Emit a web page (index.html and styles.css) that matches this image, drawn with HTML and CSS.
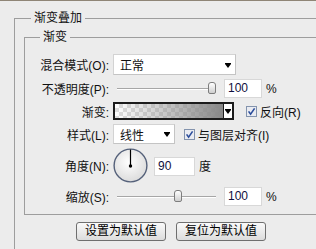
FILE: index.html
```html
<!DOCTYPE html>
<html lang="zh-CN">
<head>
    <meta charset="UTF-8">
    <title>渐变叠加</title>
    <link rel="stylesheet" href="styles.css">
</head>
<body>
    <!-- Outer group: 渐变叠加 -->
    <div class="group outer">
        <div class="group-title">渐变叠加</div>

        <!-- Inner group: 渐变 -->
        <div class="group inner">
            <div class="group-title">渐变</div>
            <div class="rows">
                <div class="row h21">
                    <span class="lbl">混合模式(O):</span>
                    <div class="select blend"><span>正常</span><i class="arrow"></i></div>
                </div>

                <div class="row h19">
                    <span class="lbl">不透明度(P):</span>
                    <div class="slider">
                        <div class="track" style="width: 95px"></div>
                        <div class="thumb"></div>
                        <div class="track rest"></div>
                    </div>
                    <div class="field">100</div>
                    <span class="unit">%</span>
                </div>

                <div class="row h18">
                    <span class="lbl">渐变:</span>
                    <div class="gradient">
                        <div class="gradient-fill"></div>
                        <div class="gradient-arrow"><i class="arrow"></i></div>
                    </div>
                    <label class="check reverse">
                        <svg width="11" height="11" viewBox="0 0 11 11"><rect x="0.5" y="0.5" width="10" height="10" fill="#e9ebf1" stroke="#8393ad"/><path d="M2.6 5.4 L4.6 8.2 L8.6 2.4" stroke="#2b4d9b" stroke-width="1.6" fill="none"/></svg>
                        反向(R)
                    </label>
                </div>

                <div class="row h20">
                    <span class="lbl">样式(L):</span>
                    <div class="select style"><span>线性</span><i class="arrow"></i></div>
                    <label class="check align">
                        <svg width="11" height="11" viewBox="0 0 11 11"><rect x="0.5" y="0.5" width="10" height="10" fill="#e9ebf1" stroke="#8393ad"/><path d="M2.6 5.4 L4.6 8.2 L8.6 2.4" stroke="#2b4d9b" stroke-width="1.6" fill="none"/></svg>
                        与图层对齐(I)
                    </label>
                </div>

                <div class="row h35">
                    <span class="lbl">角度(N):</span>
                    <svg class="dial" width="35" height="35" viewBox="0 0 35 35">
                        <defs>
                            <radialGradient id="dialFill" cx="45%" cy="40%" r="65%">
                                <stop offset="0" stop-color="#ffffff"/>
                                <stop offset="1" stop-color="#d9d9d9"/>
                            </radialGradient>
                        </defs>
                        <circle cx="17.5" cy="17.5" r="16.4" fill="url(#dialFill)" stroke="#55617a" stroke-width="1.4"/>
                        <line x1="17.5" y1="18" x2="17.5" y2="1.5" stroke="#000" stroke-width="1.2"/>
                        <circle cx="17.5" cy="18" r="1.7" fill="#000"/>
                    </svg>
                    <div class="field angle">90</div>
                    <span class="unit">度</span>
                </div>

                <div class="row h19">
                    <span class="lbl">缩放(S):</span>
                    <div class="slider">
                        <div class="track" style="width: 57px"></div>
                        <div class="thumb"></div>
                        <div class="track rest"></div>
                    </div>
                    <div class="field">100</div>
                    <span class="unit">%</span>
                </div>
            </div>
        </div>

        <div class="buttons">
            <button type="button" class="btn">设置为默认值</button>
            <button type="button" class="btn">复位为默认值</button>
        </div>
    </div>
</body>
</html>
```

FILE: styles.css
```css
* {
    box-sizing: border-box;
}

body {
    margin: 0;
    width: 316px;
    height: 249px;
    overflow: hidden;
    background: #ececec;
    border-top: 1px solid #8f8576;
    font: 12px "Liberation Sans", "Noto Sans CJK SC", sans-serif;
    color: #111;
}

/* group boxes */
.group {
    border-top: 1px solid #9d9d9d;
    border-left: 1px solid #9d9d9d;
}

.group-title {
    width: fit-content;
    height: 16px;
    line-height: 16px;
    padding: 0 3px;
    background: #ececec;
    margin: -9px 0 0 16px;
}

.outer {
    height: 231px;
    margin: 17px 0 0 14px;
}

.inner {
    margin: 11px 0 0 9px;
    padding-bottom: 8px;
    border-bottom: 1px solid #9d9d9d;
}

.inner > .group-title {
    margin-left: 15px;
}

.rows {
    margin-top: 9px;
    display: flex;
    flex-direction: column;
    gap: 4px;
}

.row {
    display: flex;
    align-items: center;
}

.h18 { height: 18px; }
.h19 { height: 19px; }
.h20 { height: 20px; }
.h21 { height: 21px; }
.h35 { height: 35px; }

.lbl {
    width: 84px;
    margin-right: 4px;
    text-align: right;
    white-space: nowrap;
}

/* dropdowns */
.select {
    height: 100%;
    display: flex;
    align-items: center;
    justify-content: space-between;
    background: #fff;
    border: 1px solid #d3d3d3;
    border-right-color: #c4c4c4;
    border-bottom-color: #c4c4c4;
    padding: 0 4px 0 6px;
}

.blend {
    width: 123px;
}

.style {
    width: 62px;
}

.arrow {
    display: block;
    width: 0;
    height: 0;
    border-left: 3.5px solid transparent;
    border-right: 3.5px solid transparent;
    border-top: 4px solid #000;
    box-shadow: 0 -1px 0 #000;
    margin-top: 2px;
}

/* sliders */
.slider {
    width: 103px;
    height: 100%;
    padding-left: 4px;
    display: flex;
    align-items: center;
}

.track {
    height: 2px;
    border-top: 1px solid #a6a6a6;
    background: #fff;
    margin-top: 1px;
}

.track.rest {
    flex: 1;
}

.thumb {
    width: 8px;
    height: 12px;
    border: 1px solid #7d7d7d;
    border-radius: 3px 3px 2px 2px;
    background: linear-gradient(#ffffff, #cfcfcf);
    margin-top: -2px;
}

.field {
    width: 38px;
    height: 19px;
    line-height: 17px;
    margin-left: 8px;
    padding-left: 3px;
    background: #fff;
    border: 1px solid #d8d8d8;
    color: #101040;
}

.field.angle {
    width: 41px;
    margin-left: 6px;
    margin-top: 2px;
}

.unit {
    margin-left: 4px;
}

/* gradient swatch */
.gradient {
    width: 121px;
    height: 18px;
    display: flex;
    border: 2px solid #1c1c1c;
}

.gradient-fill {
    flex: 1;
    background:
        linear-gradient(to right, rgba(136, 136, 136, 0), #888),
        repeating-conic-gradient(#dedede 0 25%, #ffffff 0 50%) 0 0 / 8px 8px;
}

.gradient-arrow {
    width: 9px;
    display: flex;
    align-items: center;
    justify-content: center;
    background: #fff;
    border-left: 1px solid #1c1c1c;
}

/* checkboxes */
.check {
    display: flex;
    align-items: center;
    gap: 3px;
    white-space: nowrap;
}

.check svg {
    display: block;
}

.reverse {
    margin-left: 12px;
}

.align {
    margin-left: 9px;
}

.dial {
    display: block;
}

/* buttons */
.buttons {
    display: flex;
    gap: 10px;
    margin: 7px 0 0 61px;
}

.btn {
    width: 90px;
    height: 19px;
    padding: 0;
    font: inherit;
    color: #000;
    border: 1px solid #6f6f6f;
    border-radius: 3px;
    background: linear-gradient(#fafafa, #dcdcdc);
    line-height: 17px;
}
```
